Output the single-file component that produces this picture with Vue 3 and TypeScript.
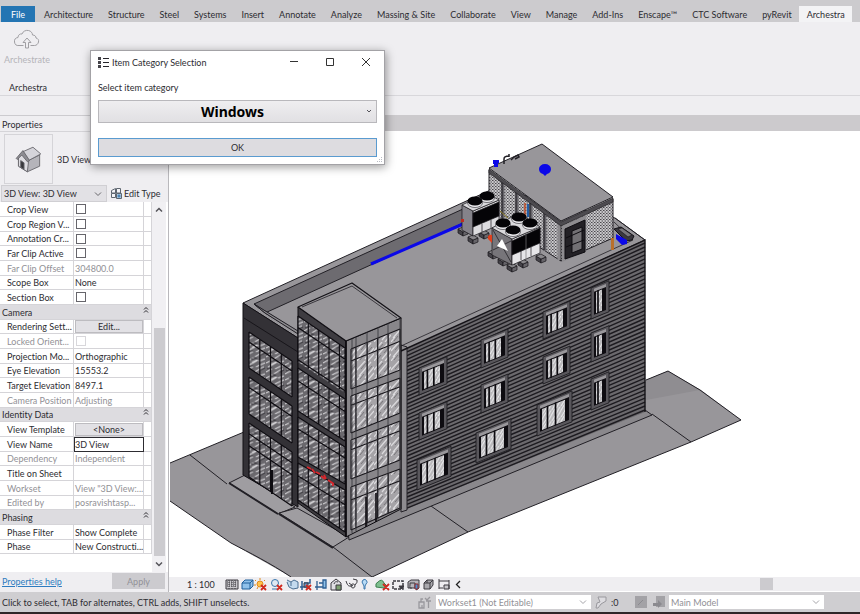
<script setup lang="ts">
import { ref } from 'vue'

type Pt = [number, number]
interface Row {
  name: string
  kind: 'check' | 'text' | 'button' | 'input' | 'group'
  value?: string
  muted?: boolean
}

const tabs = [
  'Architecture', 'Structure', 'Steel', 'Systems', 'Insert', 'Annotate', 'Analyze', 'Massing & Site',
  'Collaborate', 'View', 'Manage', 'Add-Ins', 'Enscape™', 'CTC Software', 'pyRevit', 'Archestra',
]
const activeTab = ref('Archestra')

const rows: Row[] = [
  { name: 'Crop View', kind: 'check' },
  { name: 'Crop Region V...', kind: 'check' },
  { name: 'Annotation Cr...', kind: 'check' },
  { name: 'Far Clip Active', kind: 'check' },
  { name: 'Far Clip Offset', kind: 'text', value: '304800.0', muted: true },
  { name: 'Scope Box', kind: 'text', value: 'None' },
  { name: 'Section Box', kind: 'check' },
  { name: 'Camera', kind: 'group' },
  { name: 'Rendering Sett...', kind: 'button', value: 'Edit...' },
  { name: 'Locked Orient...', kind: 'check', muted: true },
  { name: 'Projection Mo...', kind: 'text', value: 'Orthographic' },
  { name: 'Eye Elevation', kind: 'text', value: '15553.2' },
  { name: 'Target Elevation', kind: 'text', value: '8497.1' },
  { name: 'Camera Position', kind: 'text', value: 'Adjusting', muted: true },
  { name: 'Identity Data', kind: 'group' },
  { name: 'View Template', kind: 'button', value: '<None>' },
  { name: 'View Name', kind: 'input', value: '3D View' },
  { name: 'Dependency', kind: 'text', value: 'Independent', muted: true },
  { name: 'Title on Sheet', kind: 'text', value: '' },
  { name: 'Workset', kind: 'text', value: 'View "3D View:...', muted: true },
  { name: 'Edited by', kind: 'text', value: 'posravishtasp...', muted: true },
  { name: 'Phasing', kind: 'group' },
  { name: 'Phase Filter', kind: 'text', value: 'Show Complete' },
  { name: 'Phase', kind: 'text', value: 'New Constructi...' },
]

const pts = (list: Pt[]) => list.map((p) => p.join(',')).join(' ')
const mix = (a: number, b: number, t: number) => Math.round((a + (b - a) * t) * 10) / 10

/* Siding courses run between the left and right edges of the long wall. */
const siding = Array.from({ length: 43 }, (_, i) => {
  const t = (i + 0.5) / 43
  return `M407 ${mix(350, 510, t)}L645 ${mix(241, 412, t)}`
}).join('')

interface Bay { x0: number; x1: number; tl: number; tr: number; bl: number; br: number; bars: number[]; rails: number[] }
const bayPoly = (b: Bay) => pts([[b.x0, b.tl], [b.x1, b.tr], [b.x1, b.br], [b.x0, b.bl]])
const bayBars = (b: Bay) => {
  const v = b.bars.map((t) => {
    const x = mix(b.x0, b.x1, t)
    return `M${x} ${mix(b.tl, b.tr, t)}L${x} ${mix(b.bl, b.br, t)}`
  })
  const h = b.rails.map((t) => `M${b.x0} ${mix(b.tl, b.bl, t)}L${b.x1} ${mix(b.tr, b.br, t)}`)
  return v.concat(h).join('')
}
const quarter = [0, 0.25, 0.5, 0.75, 1]
const wing: Bay[] = [
  { x0: 249, x1: 292, tl: 332, tr: 361, bl: 368, br: 397, bars: quarter, rails: [0, 0.28, 1] },
  { x0: 249, x1: 292, tl: 377, tr: 406, bl: 414, br: 443, bars: quarter, rails: [0, 0.28, 1] },
  { x0: 249, x1: 292, tl: 423, tr: 452, bl: 477, br: 506, bars: quarter, rails: [0, 0.2, 0.42, 1] },
]
const fifth = [0, 0.22, 0.44, 0.66, 0.88, 1]
const towerLeft: Bay[] = [
  { x0: 298, x1: 345, tl: 316, tr: 348, bl: 362, br: 393, bars: fifth, rails: [0, 0.25, 0.95] },
  { x0: 298, x1: 345, tl: 368, tr: 399, bl: 411, br: 441, bars: fifth, rails: [0, 0.3, 1] },
  { x0: 298, x1: 345, tl: 417, tr: 447, bl: 457, br: 484, bars: fifth, rails: [0, 0.3, 1] },
  { x0: 298, x1: 345, tl: 463, tr: 490, bl: 500, br: 532, bars: fifth, rails: [0, 0.35, 1] },
]
const towerBars = [0, 0.1, 0.33, 0.54, 0.76, 1]
const towerRight: Bay[] = [
  { x0: 351, x1: 400, tl: 349, tr: 329, bl: 389, br: 370, bars: towerBars, rails: [0, 0.3, 1] },
  { x0: 351, x1: 400, tl: 396, tr: 378, bl: 433, br: 413, bars: towerBars, rails: [0, 0.25, 1] },
  { x0: 351, x1: 400, tl: 440, tr: 421, bl: 479, br: 460, bars: towerBars, rails: [0, 0.25, 1] },
  { x0: 351, x1: 400, tl: 487, tr: 469, bl: 530, br: 508, bars: towerBars, rails: [0, 0.3, 1] },
]

interface Win { x: number; y: number; w: number; h: number }
const windows: Win[] = [
  { x: 419, y: 368, w: 28, h: 27 }, { x: 419, y: 413, w: 28, h: 27 }, { x: 417, y: 460, w: 34, h: 30 },
  { x: 481, y: 340, w: 27, h: 28 }, { x: 481, y: 385, w: 27, h: 28 }, { x: 476, y: 433, w: 35, h: 30 },
  { x: 543, y: 312, w: 27, h: 27 }, { x: 543, y: 357, w: 27, h: 27 }, { x: 537, y: 405, w: 35, h: 31 },
  { x: 591, y: 288, w: 18, h: 31 }, { x: 591, y: 333, w: 18, h: 29 }, { x: 591, y: 379, w: 18, h: 31 },
]

const feet: Pt[] = [
  [458, 229], [468, 237], [479, 232], [488, 252], [498, 259], [507, 265], [518, 261], [536, 256],
]
const condenserFans: Pt[] = [[487, 196], [475, 201], [519, 217], [503, 223], [530, 223], [513, 230]]
</script>

<template>
  <div class="app">
    <nav class="tabs" aria-label="Ribbon tabs">
      <button class="file" type="button">File</button>
      <button
        v-for="t in tabs"
        :key="t"
        type="button"
        class="tab"
        :class="{ active: t === activeTab }"
        @click="activeTab = t"
      >{{ t }}</button>
    </nav>

    <section class="ribbon">
      <button class="tool" type="button" disabled>
        <svg width="26" height="20" viewBox="0 0 26 20" fill="none" stroke="#a09fa3" stroke-width="1">
          <path d="M9.500 16.500H5a4 4 0 0 1-1-8c0-2.500 2-4 4-3.500C9 2 12 1 14.500 1.500c2.500.500 4 2.500 4 4.500 2.500 0 3.500 1.500 3.500 3 2 .500 3 2 2.500 4-.500 2-2 3.500-4 3.500H16.500" />
          <path d="M11.500 19v-5.500H9L13 9l4 4.500h-2.500V19z" />
        </svg>
        <span>Archestrate</span>
      </button>
      <p class="ribbon-title">Archestra</p>
    </section>

    <div class="options"></div>

    <div class="body">
      <aside class="panel">
        <h2>Properties</h2>
        <div class="type">
          <div class="thumb">
            <svg width="29" height="29" viewBox="0 0 26 26" stroke="#66656b" stroke-width=".8" stroke-linejoin="round">
              <path d="M4 11v8l8 5 1-9z" fill="#e9e8ec" />
              <path d="M12 14v10l11-5V9z" fill="#b5b4ba" />
              <path d="M4 11l4-4 5 8-1 9-8-5z" fill="#dddce1" />
              <path d="M8 6l9-4 7 6-11 6z" fill="#d5d4da" />
              <path d="M2 12l6-7 6 9-2 1-5-6-4 4z" fill="#8d8c92" />
              <path d="M6 14l3 2v6l-3-2z" fill="#38373c" />
            </svg>
          </div>
          <span>3D View</span>
        </div>
        <div class="selector">
          <span class="pick">
            <select aria-label="Type selector"><option>3D View: 3D View</option></select>
            <svg width="8" height="6" viewBox="0 0 8 6"><path d="M1 1.500l3 3 3-3" fill="none" stroke="#66656a" /></svg>
          </span>
          <button class="edit-type" type="button">
            <svg width="11" height="11" viewBox="0 0 11 11" fill="#f4f4f7" stroke="#5e6670">
              <path d="M.5 2.500l4-2v4.500h-4zM5.500.5h4v4.500h-4zM.5 5.500h4v4h-4z" />
              <path d="M5.500 5.500h5v5h-5z" fill="#a9c6de" />
              <path d="M6.500 8h3M8 6.500v3" stroke="#2e6ea8" />
            </svg>
            Edit Type
          </button>
        </div>

        <div class="grid">
          <table>
            <tbody>
              <tr v-for="r in rows" :key="r.name" :class="[r.kind, { muted: r.muted }]">
                <template v-if="r.kind === 'group'">
                  <th colspan="3" scope="rowgroup">
                    <span class="group">
                      {{ r.name }}
                      <svg width="6" height="8" viewBox="0 0 6 8" fill="none" stroke="#2c2b30"><path d="M1 3.500l2-2 2 2M1 6.500l2-2 2 2" /></svg>
                    </span>
                  </th>
                </template>
                <template v-else>
                  <th scope="row">{{ r.name }}</th>
                  <td>
                    <input v-if="r.kind === 'check'" type="checkbox" :aria-label="r.name" :disabled="r.muted">
                    <button v-else-if="r.kind === 'button'" type="button">{{ r.value }}</button>
                    <input v-else-if="r.kind === 'input'" type="text" :value="r.value" :aria-label="r.name">
                    <template v-else>{{ r.value }}</template>
                  </td>
                  <td></td>
                </template>
              </tr>
            </tbody>
          </table>
          <div class="scroll">
            <svg width="8" height="6" viewBox="0 0 8 6"><path d="M1 4.500l3-3 3 3" fill="none" stroke="#55545a" stroke-width="1.500" /></svg>
            <span class="track"></span>
            <span class="thumb-bar"></span>
            <svg width="8" height="6" viewBox="0 0 8 6"><path d="M1 1.500l3 3 3-3" fill="none" stroke="#55545a" stroke-width="1.500" /></svg>
          </div>
        </div>

        <footer>
          <a href="#help">Properties help</a>
          <button type="button" disabled>Apply</button>
        </footer>
      </aside>

      <main class="view">
        <div class="doc-strip"></div>
        <div class="canvas">
          <svg viewBox="170 131 690 446" preserveAspectRatio="xMinYMin meet" role="img" aria-label="3D building model">
            <defs>
              <pattern id="glassDark" width="19" height="15" patternUnits="userSpaceOnUse" patternTransform="skewY(6)">
                <rect width="19" height="15" fill="#6a686d" />
                <path d="M0 5l7-4M2 9l9-6M9 10l9-5M0 14l6-4M8 15l9-6M12 4l6-3M5 6l5-3" stroke="#d6d5d8" stroke-width="1" />
                <path d="M4 3l6-2M13 13l5-3M1 11l5-2" stroke="#3a383e" stroke-width="1" />
              </pattern>
              <pattern id="glassLight" width="17" height="19" patternUnits="userSpaceOnUse">
                <rect width="17" height="19" fill="#a5a3a7" />
                <path d="M0 9l8-9M2 15l12-14M8 17l9-11M0 19l4-5M11 19l6-7" stroke="#dcdbde" stroke-width="1.200" />
                <path d="M4 8l5-6M10 11l5-6M3 18l4-5" stroke="#77757a" stroke-width="1" />
              </pattern>
              <pattern id="pane" width="9" height="11" patternUnits="userSpaceOnUse">
                <rect width="9" height="11" fill="#b9b8bb" />
                <path d="M0 7l5-7M1 11l8-11M6 11l3-4" stroke="#eeeef0" stroke-width="1.200" />
              </pattern>
              <pattern id="louvre" width="3" height="3" patternUnits="userSpaceOnUse">
                <rect width="3" height="3" fill="#c9c8cb" />
                <path d="M0 .5h1.500M1.500 2h1.500" stroke="#4a484d" stroke-width="1" />
              </pattern>
            </defs>

            <!-- ground -->
            <g stroke="#222026" stroke-width="1" stroke-linejoin="round">
              <path d="M170 463L244 432V380H646L668 371L701 390L741 420L691 442L468 532L372 577H291L231 543L170 501z" fill="#98969a" stroke="none" />
              <path d="M646 400L700 390L668 371L646 380z" fill="#8f8d91" stroke="none" />
              <path d="M170 463L244 432M646 380L668 371L700 390L741 420L691 442L468 532L372 577M291 577C270 563 250 553 231 543L170 501" fill="none" />
              <path d="M190 455L227 484M333 547L372 577M431 506L468 532M652 414L691 442" fill="none" />
              <path d="M229 483L245 475L295 507L278 514z" fill="#9f9da1" />
              <path d="M279 513L297 508L349 537L333 547z" fill="#9f9da1" />
              <path d="M229 483L278 514M279 514L333 548" fill="none" stroke-width="2" />
              <path d="M348 531L401 507L645 410L652 415L349 540z" fill="#8a888c" />
            </g>

            <!-- roof -->
            <g stroke="#222026" stroke-width="1" stroke-linejoin="round">
              <path d="M243 303L462 203L495 188L615 218L645 240L401 352L298 338z" fill="#98969a" />
              <path d="M254 304L463 209V223L265 313z" fill="#6d6b70" />
              <path d="M254 304L298 332M265 313L298 333M401 346L633 240L614 222M615 218L645 240" fill="none" stroke-width=".8" />
              <path d="M254 304L265 313L298 334V331z" fill="#8b898d" />
            </g>
            <path d="M371 264L463 224" stroke="#0b08e8" stroke-width="3" />

            <!-- long wall -->
            <path d="M401 351L645 240V412L401 511z" fill="#6b696d" />
            <path :d="siding" stroke="#1d1b20" stroke-width="1.400" />
            <path d="M401 345L407 347V510L401 512z" fill="#8e8c90" stroke="#222026" />
            <path d="M401 351L645 240V412" fill="none" stroke="#151318" stroke-width="1.400" />

            <g v-for="(w, i) in windows" :key="i" :transform="`translate(${w.x} ${w.y}) skewY(-22)`">
              <rect :width="w.w" :height="w.h" fill="#59575c" stroke="#1d1b20" stroke-width=".8" />
              <rect x="3" y="3" :width="w.w - 6" :height="w.h - 6" fill="#0e0c11" />
              <rect x="5" y="6" :width="w.w - 12" :height="w.h - 10" fill="url(#pane)" />
              <rect x="3" y="2" :width="w.w - 6" height="3" fill="#99979b" />
              <path
                :d="w.w > 20 ? `M${w.w * 0.3} 5V${w.h - 3}M${w.w * 0.53} 5V${w.h - 3}` : `M7 5V${w.h - 3}`"
                stroke="#0e0c11"
                stroke-width="1.700"
              />
            </g>

            <!-- left wing -->
            <path d="M243 303L298 338V507L243 475z" fill="#333136" stroke="#121015" />
            <path d="M244 318L298 352" stroke="#17151a" fill="none" />
            <g v-for="(b, i) in wing" :key="'w' + i">
              <polygon :points="bayPoly(b)" fill="url(#glassDark)" />
              <path :d="bayBars(b)" stroke="#0e0c11" stroke-width="1.200" />
            </g>
            <path d="M272 470V494" stroke="#0e0c11" stroke-width="2" />

            <!-- corner tower -->
            <path d="M298 307L346 341V537L298 503z" fill="#3e3c41" stroke="#0e0c11" />
            <path d="M346 341L401 318V509L346 537z" fill="#88868a" stroke="#0e0c11" />
            <path d="M298 307L352 283L401 318L346 341z" fill="#98969a" stroke="#121015" stroke-width="1.200" stroke-linejoin="round" />
            <path d="M302 307L352 286L397 318" fill="none" stroke="#222026" stroke-width=".8" />
            <g v-for="(b, i) in towerLeft" :key="'l' + i">
              <polygon :points="bayPoly(b)" fill="url(#glassDark)" />
              <path :d="bayBars(b)" stroke="#0e0c11" stroke-width="1.200" />
            </g>
            <g v-for="(b, i) in towerRight" :key="'r' + i">
              <polygon :points="bayPoly(b)" fill="url(#glassLight)" />
              <path :d="bayBars(b)" stroke="#17151a" stroke-width="1.100" />
            </g>
            <path d="M352 339V533M356 337V531M367 332V527M378 327V521M388 323V514M400 318V510" stroke="#343238" stroke-width=".8" />
            <path d="M376 493V522M366 497V527" stroke="#0e0c11" stroke-width="1.600" />
            <path d="M307 467l4 2M312 469l3 4M316 472l4 2M321 476l4 3M324 475l2 4M328 480l6 4M333 483v3" stroke="#d8262c" stroke-width="1.800" />
            <path d="M346 341V537" stroke="#0e0c11" stroke-width="1.600" />

            <!-- penthouse -->
            <path d="M489 170L561 224V261L489 215z" fill="url(#louvre)" stroke="#222026" />
            <path d="M561 224L613 199V238L561 261z" fill="url(#louvre)" stroke="#222026" />
            <path d="M503 182V224M517 192V232M531 203V242M545 214V251" stroke="#66646a" stroke-width="3" />
            <path d="M502 181V224M516 192V232M530 203V241M544 214V250" stroke="#17151a" stroke-width="1" />
            <path d="M559 222V260" stroke="#8b898d" stroke-width="3" />
            <path d="M562 226L586 215V252L562 262z" fill="#8e8c90" />
            <path d="M565 229L585 220V252L565 259z" fill="#232126" stroke="#0e0c11" />
            <path d="M572 231L582 227V249L572 253z" fill="#727074" stroke="#0e0c11" />
            <path d="M566 238L584 230M566 247L584 240" stroke="#0e0c11" />
            <path d="M489 168L542 144L613 197L561 221z" fill="#98969a" stroke="#222026" />
            <path d="M489 169L561 222L613 198V202L561 226L489 173z" fill="#4d4b50" stroke="#17151a" stroke-width=".6" />
            <path d="M539 169a6 5 0 0 1 12 0q0 4-4 5l-2 2-2-2q-4-1-4-5" fill="#0b08e8" />
            <path d="M493 160h6v3h-1v4h-4v-3h-1z" fill="#0b08e8" />
            <path d="M504 164v-5q0-3 5-3M511 160l3-3 4-2 1 2-4 2M509 154v3" fill="none" stroke="#222026" stroke-width="1.500" />
            <path d="M525 203v14" stroke="#c04a24" stroke-width="1.500" />
            <path d="M528 204v13" stroke="#245ea5" stroke-width="2" />

            <!-- rooftop plant -->
            <g stroke="#17151a" stroke-width=".7">
              <g v-for="(f, i) in feet" :key="'f' + i" :transform="`translate(${f[0]} ${f[1]})`">
                <path d="M0 0l5 3v4l-5-3z" fill="#444248" />
                <path d="M5 3l5-2v4l-5 2z" fill="#67656a" />
                <path d="M0 0l5-2 5 3-5 2z" fill="#88868a" />
              </g>
              <path d="M462 205L473 211V236L462 230z" fill="#85838a" />
              <path d="M473 211L499 200V225L473 236z" fill="#dddcdf" />
              <path d="M473 213L499 202V216L473 227z" fill="#050407" />
              <path d="M462 205L487 193L499 200L473 211z" fill="#dad9dc" />
              <path d="M482 224v8M491 220v8" />
              <path d="M492 228L512 239V265L492 255z" fill="#77757a" />
              <path d="M512 239L540 227V253L512 265z" fill="#e6e5e8" />
              <path d="M512 241L540 228V243L512 255z" fill="#050407" />
              <path d="M492 228L519 213L540 227L512 239z" fill="#dad9dc" />
              <path d="M526 235v24" stroke="#77757a" />
              <path d="M521 251v9M531 247v9" />
              <path d="M493 230L511 262M511 241L493 250" fill="none" />
              <path d="M502 239L508 251L497 246z" fill="#fff" stroke="none" />
            </g>
            <g v-for="(f, i) in condenserFans" :key="'c' + i">
              <ellipse :cx="f[0]" :cy="f[1] + 2" rx="7.500" ry="4.500" fill="#f0eff2" stroke="#222026" stroke-width=".6" />
              <ellipse :cx="f[0]" :cy="f[1]" rx="7.500" ry="4.500" fill="#050407" />
            </g>
            <path d="M488 239a3 3 0 0 1 4-4v8z" fill="#e0401c" />
            <path d="M461 219h3v3h-3z" fill="#c02c20" />
            <path d="M500 211l8 7" stroke="#8a7a20" stroke-width="1" />
            <path d="M614 229L621 227L634 236L632 240L626 241z" fill="#3a383e" stroke="#121015" />
            <path d="M618 229l4-1 10 7-4 2z" fill="#77757a" stroke="#121015" stroke-width=".6" />
            <path d="M616 234l11 6v4l-5 1-6-6z" fill="#0b08e8" />
            <path d="M611 238h3v12h-3z" fill="#b8702c" />
          </svg>
        </div>

        <div class="view-bar">
          <span class="scale">1 : 100</span>
          <svg width="230" height="13" viewBox="0 0 230 13" fill="none" stroke="#3c3b41">
            <path d="M1 2h12v9H1z" fill="#c9c8cc" />
            <path d="M2 4h10M2 6h10M2 8h10M4 2v9M7 2v9M10 2v9" stroke-dasharray="1 1" />
            <path d="M17 5l3-3h8v6l-3 3h-8z" fill="#8fc1ea" stroke="#1f5f9a" />
            <path d="M17 5h8l3-3M25 5v6" stroke="#1f5f9a" />
            <circle cx="35" cy="6" r="3" fill="#ffc44d" stroke="#e08a1e" />
            <path d="M35 0v2M30 2l1 1M29 7h2M40 2l-1 1M32 11l1-2" stroke="#e08a1e" />
            <circle cx="50" cy="5" r="3.500" fill="#dfe9f3" stroke="#3b77ad" />
            <path d="M47 11h5" stroke="#3b77ad" />
            <path d="M62 4l2 5 4 2 5-1V4l-4-2-3 2-4-2M66 4v4" fill="#c4daee" stroke="#4b6f92" />
            <path d="M77 3v9M75 9h10M79 5h6V1" stroke="#2e5f92" stroke-width="1.500" />
            <path d="M79 5h4v4h-4z" fill="#5d9bd3" />
            <path d="M92 3v9M90 9h8M94 5h4M98 2h3v8h-3z" fill="#8fc1ea" stroke="#2e5f92" stroke-width="1.300" />
            <path d="M106 5l5-4 5 4v7h-10zM109 6a3 3 0 0 1 4-2" fill="#dfdee2" />
            <path d="M111 7h5v5h-5z" fill="#7d9f6f" />
            <path d="M121 3c2 6 3 5 6 5M126 8a2 2 0 1 0 0-.1M130 7q3-3 2-5l-4-1M124 5l4 3" />
            <path d="M138 2a2.500 2.500 0 0 1 3 4l-1 2v3h-1V8l-1-2q-2-2 0-4z" fill="#b9dcf7" stroke="#3b77ad" />
            <path d="M151 9q-1-4 2-5 4-4 6 1l3 3-3 2z" fill="#7fbf8f" stroke="#3c7f4f" />
            <path d="M36 7l5 5M41 7l-5 5M52 7l5 5M57 7l-5 5M81 7l5 5M86 7l-5 5M158 6l6 6M164 6l-6 6" stroke="#d02a20" stroke-width="1.800" />
            <path d="M168 3h10v8h-10z" stroke-width="1.500" stroke-dasharray="3 1" />
            <path d="M174 8l2 3 3-3z" fill="#3c3b41" />
            <path d="M183 4l3-2h8v8l-3 2M183 4v6h4M185 5h5v5h-5z" fill="#b6b4ba" />
            <path d="M190 6h3v5h-3z" fill="#4b8fce" stroke="#8d2a30" />
            <path d="M199 5l3-3h6v5l-3 4h-6zM199 5h6v6M202 2v3M205 5l3-3" fill="#a9a8ad" />
            <path d="M214 1v10M224 2v9M214 3h10M214 10h4M219 7h5v4h-5z" fill="#c9c8cc" />
          </svg>
          <svg width="6" height="9" viewBox="0 0 6 9"><path d="M5 1L1.500 4.500 5 8" fill="none" stroke="#222" stroke-width="1.300" /></svg>
          <span class="hscroll"><span class="hthumb"></span></span>
        </div>
      </main>
    </div>

    <div class="status">
      <span class="message">Click to select, TAB for alternates, CTRL adds, SHIFT unselects.</span>
      <svg width="14" height="13" viewBox="0 0 14 13" fill="none" stroke="#99989d"><path d="M1 6h5v6H1zM3 6V3h2M8 5h5M10.500 5v7M7 2l2 2 3-3M4 9v3" stroke-width="1.300" /></svg>
      <span class="pick wide">
        <select aria-label="Active workset"><option>Workset1 (Not Editable)</option></select>
        <svg width="8" height="6" viewBox="0 0 8 6"><path d="M1 1.500l3 3 3-3" fill="none" stroke="#a5a4a9" /></svg>
      </span>
      <svg width="12" height="13" viewBox="0 0 12 13" fill="#dddce0" stroke="#99989d"><path d="M3 1h8v4L6 8l-3 4H1l1-5 3-1z" /></svg>
      <span class="count">:0</span>
      <svg width="30" height="13" viewBox="0 0 30 13" fill="#a3a2a6">
        <path d="M0 0h12v12H0zM21 0h9v11h-9z" />
        <path d="M18 7h5V4l4 4-4 4v-2h-5z" fill="#8b8a8f" />
        <path d="M3 9l5-5" stroke="#8b8a8f" />
      </svg>
      <span class="pick wide">
        <select aria-label="Design option"><option>Main Model</option></select>
        <svg width="8" height="6" viewBox="0 0 8 6"><path d="M1 1.500l3 3 3-3" fill="none" stroke="#a5a4a9" /></svg>
      </span>
    </div>

    <div class="dialog" role="dialog" aria-labelledby="dialog-title">
      <header>
        <svg width="12" height="11" viewBox="0 0 12 11" fill="none" stroke="#26252a">
          <path d="M5 1.500h6M5 5.500h6M5 9.500h6" />
          <path d="M0 1.500h3M0 5.500h3M0 9.500h3" stroke-width="3" stroke="#45444a" />
        </svg>
        <span id="dialog-title">Item Category Selection</span>
        <button type="button" aria-label="Minimize"><svg width="10" height="10" viewBox="0 0 10 10"><path d="M1 4.500h8" stroke="#333" /></svg></button>
        <button type="button" aria-label="Maximize"><svg width="10" height="10" viewBox="0 0 10 10"><path d="M1.500 1.500h7v7h-7z" fill="none" stroke="#333" /></svg></button>
        <button type="button" aria-label="Close"><svg width="10" height="10" viewBox="0 0 10 10"><path d="M1 1l8 8M9 1L1 9" stroke="#333" /></svg></button>
      </header>
      <label for="category">Select item category</label>
      <span class="category">
        <select id="category"><option>Windows</option></select>
        <svg width="6" height="5" viewBox="0 0 6 5"><path d="M1 1l2 2 2-2" fill="none" stroke="#55545a" /></svg>
      </span>
      <button class="ok" type="button">OK</button>
      <svg class="grip" width="6" height="6" viewBox="0 0 6 6" fill="#b9bcc4"><path d="M4 0h1v1H4zM2 2h1v1H2zM4 2h1v1H4zM0 4h1v1H0zM2 4h1v1H2zM4 4h1v1H4z" /></svg>
    </div>
  </div>
</template>

<style>
body {
  background: #efeef1;
}
</style>

<style scoped>
.app {
  position: relative;
  display: flex;
  flex-direction: column;
  box-sizing: border-box;
  min-height: 100vh;
  border-bottom: 2px solid #2f2628;
  background: #efeef1;
  color: #2d2c31;
  font: 9px/13px Lato, "Open Sans", sans-serif;
  font-variant-ligatures: none;
}
button,
select,
input {
  box-sizing: border-box;
  margin: 0;
  padding: 0;
  border: 0;
  border-radius: 0;
  background: none;
  color: inherit;
  font: inherit;
  font-variant-ligatures: none;
  appearance: none;
}
svg {
  display: block;
  flex: none;
}
.tabs {
  display: flex;
  height: 16px;
  padding: 6px 0 0 1px;
  background: #cccbce;
  white-space: nowrap;
}
.file {
  width: 34px;
  margin-right: 1px;
  background: #2475b3;
  color: #fff;
}
.tab {
  padding: 0 7px 0 8px;
}
.tab.active {
  background: #f3f3f5;
}
.ribbon {
  display: flex;
  flex-direction: column;
  align-items: flex-start;
  justify-content: space-between;
  height: 73px;
  border-bottom: 1px solid #d8d7db;
}
.tool {
  display: flex;
  flex-direction: column;
  align-items: center;
  gap: 4px;
  padding: 7px 0 0 4px;
  color: #b5b4b9;
}
.ribbon-title {
  margin: 0;
  padding: 0 0 1px 9px;
}
.options {
  height: 19px;
}
.body {
  display: flex;
  flex: 1;
  min-height: 0;
}
.panel {
  display: flex;
  flex-direction: column;
  flex: 0 0 168px;
  border-top: 1px solid #cccbcf;
  border-right: 1px solid #b9b8bc;
}
h2 {
  margin: 0;
  padding: 2px 2px 0;
  border-bottom: 1px solid #d5d4d8;
  font-size: 9px;
  font-weight: 400;
}
.type {
  display: flex;
  align-items: center;
  gap: 4px;
  padding: 2px 4px 1px;
}
.thumb {
  display: flex;
  align-items: center;
  justify-content: center;
  box-sizing: border-box;
  width: 49px;
  height: 50px;
  border: 1px solid #d5d4d8;
}
.selector {
  display: flex;
  align-items: center;
  gap: 4px;
  padding-left: 1px;
}
.pick {
  display: flex;
  align-items: center;
  box-sizing: border-box;
  width: 106px;
  height: 17px;
  padding: 0 4px 0 2px;
  border: 1px solid #d0cfd3;
  background: #e2e1e5;
}
.pick select {
  flex: 1;
  min-width: 0;
}
.edit-type {
  display: flex;
  align-items: center;
  gap: 2px;
}
.grid {
  display: flex;
  flex: 1;
  align-items: stretch;
  background: #fff;
}
table {
  flex: none;
  align-self: flex-start;
  width: 152px;
  border-spacing: 0;
  table-layout: fixed;
}
tr {
  height: 15px;
}
tr:nth-child(3n) {
  height: 14px;
}
th,
td {
  box-sizing: border-box;
  padding: 0 0 0 2px;
  border-right: 1px solid #d5d4d8;
  border-bottom: 1px solid #d5d4d8;
  font-weight: 400;
  line-height: 13px;
  text-align: left;
  white-space: nowrap;
}
th {
  width: 74px;
  padding-left: 7px;
}
td:last-child {
  width: 8px;
  padding: 0;
}
td:nth-child(2) {
  padding-left: 1px;
}
.muted {
  color: #929196;
}
.group th {
  padding-left: 2px;
  background: #dddce0;
}
span.group {
  display: flex;
  justify-content: space-between;
  padding-right: 2px;
}
td input[type='checkbox'] {
  display: block;
  width: 10px;
  height: 10px;
  margin-left: 1px;
  border: 1px solid #66656b;
  background: #fff;
}
.muted input[type='checkbox'] {
  border-color: #d8d7db;
}
td input[type='text'] {
  display: block;
  width: 100%;
  height: 13px;
  outline: 1px solid #2d2c31;
}
td button {
  display: block;
  width: 100%;
  height: 13px;
  border: 1px solid #bdbcc0;
  background: #e2e1e5;
  line-height: 11px;
}
.scroll {
  display: flex;
  flex: 1;
  flex-direction: column;
  align-items: center;
  margin-right: 2px;
  padding: 5px 0;
  background: #f1f0f3;
}
.track {
  flex: 115;
}
.thumb-bar {
  flex: 228;
  width: 11px;
  margin-bottom: 5px;
  background: #cccbcf;
}
.panel footer {
  display: flex;
  align-items: center;
  justify-content: space-between;
  padding: 1px 3px 3px 2px;
}
a {
  color: #2e7cc0;
}
.panel footer button {
  width: 53px;
  height: 16px;
  background: #cccbcf;
  color: #929196;
}
.view {
  display: flex;
  flex: 1;
  flex-direction: column;
  min-width: 0;
}
.doc-strip {
  height: 16px;
  background: #cccacd;
}
.canvas {
  flex: 1;
  min-height: 0;
  padding-left: 1px;
  background: #fff;
}
.canvas svg {
  width: 100%;
  height: auto;
}
.view-bar {
  display: flex;
  align-items: center;
  height: 14px;
  padding-left: 18px;
  border-bottom: 1px solid #fff;
}
.scale {
  width: 38px;
}
.hscroll {
  display: flex;
  flex: 1;
  justify-content: flex-end;
  margin-left: 8px;
}
.hthumb {
  width: 13px;
  height: 12px;
  margin-right: 87px;
  background: #cccbcf;
}
.status {
  display: flex;
  align-items: center;
  gap: 4px;
  height: 20px;
  padding: 0 36px 0 2px;
  background: #cfced1;
  white-space: nowrap;
}
.message {
  flex: 1;
}
.pick.wide {
  width: 155px;
  height: 14px;
  border: 0;
  background: #fff;
  color: #929196;
}
.count {
  width: 20px;
}
.dialog {
  position: absolute;
  top: 50px;
  left: 90px;
  display: flex;
  flex-direction: column;
  box-sizing: border-box;
  width: 295px;
  padding: 0 7px 7px;
  border: 1px solid #a3a2a6;
  background: #fff;
  box-shadow: 1px 2px 9px rgba(0, 0, 0, 0.4);
}
.dialog header {
  display: flex;
  align-items: center;
  height: 22px;
  margin-right: -7px;
}
.dialog header span {
  flex: 1;
  padding-left: 2px;
}
.dialog header button {
  display: flex;
  align-items: center;
  justify-content: center;
  width: 36px;
  height: 22px;
}
.dialog label {
  padding: 8px 0 6px;
}
.category {
  position: relative;
  display: flex;
}
.category select {
  flex: 1;
  height: 23px;
  padding: 0 10px 0 0;
  border: 1px solid #b9b8bc;
  background: linear-gradient(#efeef0, #e1e0e3);
  color: #000;
  font: 700 14px/20px "Noto Sans", "Open Sans", sans-serif;
  text-align-last: center;
}
.category svg {
  position: absolute;
  top: 9px;
  right: 5px;
}
.ok {
  height: 19px;
  margin-top: 15px;
  border: 1px solid #5a9bd0;
  background: #dddce0;
}
.grip {
  position: absolute;
  right: 1px;
  bottom: 1px;
}
</style>
